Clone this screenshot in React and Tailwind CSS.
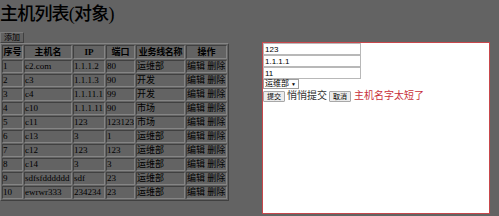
import React from "react";

const rows = [
  ["1", "c2.com", "1.1.1.2", "80", "运维部"],
  ["2", "c3", "1.1.1.3", "90", "开发"],
  ["3", "c4", "1.1.11.1", "99", "开发"],
  ["4", "c10", "1.1.1.11", "90", "市场"],
  ["5", "c11", "123", "123123", "市场"],
  ["6", "c13", "3", "1", "运维部"],
  ["7", "c12", "123", "123", "运维部"],
  ["8", "c14", "3", "3", "运维部"],
  ["9", "sdfsfdddddd", "sdf", "23", "运维部"],
  ["10", "ewrwr333", "234234", "23", "运维部"],
];

const serif = "font-['Liberation_Serif','Noto_Sans_CJK_SC',serif]";
const sans = "font-['Liberation_Sans','Noto_Sans_CJK_SC',sans-serif]";

const cell =
  "border border-t-[#404040] border-l-[#404040] border-b-[#858585] border-r-[#858585] p-0 h-[13px] leading-[11px] text-left align-middle whitespace-nowrap overflow-hidden";
const head =
  "border border-t-[#404040] border-l-[#404040] border-b-[#858585] border-r-[#858585] p-0 h-[14px] leading-[12px] font-bold text-center whitespace-nowrap";

export default function App() {
  return (
    <div className={`relative w-[499px] h-[216px] bg-[#636363] overflow-hidden text-black ${serif}`}>
      <h1 className="text-[18px] leading-[26px] font-medium pt-[1px] tracking-[-0.8px]">主机列表(对象)</h1>
      <div className="pt-[5px]">
        <button className={`block h-[11px] px-[3px] text-[8px] leading-[9px] bg-[#626262] border border-t-[#7a7a7a] border-l-[#7a7a7a] border-b-[#404040] border-r-[#404040] ${sans}`}>
          添加
        </button>
      </div>
      <table className="border-separate border-spacing-px border border-t-[#858585] border-l-[#858585] border-b-[#404040] border-r-[#404040] text-[9px] table-fixed w-[226px]">
        <colgroup>
          <col className="w-[21px]" />
          <col className="w-[48px]" />
          <col className="w-[32px]" />
          <col className="w-[29px]" />
          <col className="w-[49px]" />
          <col className="w-[41px]" />
        </colgroup>
        <thead>
          <tr>
            <th className={head}>序号</th>
            <th className={head}>主机名</th>
            <th className={head}>IP</th>
            <th className={head}>端口</th>
            <th className={`${head} tracking-[-0.3px]`}>业务线名称</th>
            <th className={head}>操作</th>
          </tr>
        </thead>
        <tbody>
          {rows.map((r) => (
            <tr key={r[0]}>
              {r.map((c, i) => (
                <td key={i} className={cell}>
                  {c}
                </td>
              ))}
              <td className={cell}>编辑 删除</td>
            </tr>
          ))}
        </tbody>
      </table>

      <div className={`absolute left-[262px] top-[42px] w-[228px] h-[172px] bg-white border border-[#c8474c] ${sans}`}>
        <div className="flex flex-col items-start">
          <input readOnly value="123" className="w-[98px] h-[12px] border border-[#b8b8b8] text-[8px] leading-[10px] px-[1px] outline-none" />
          <input readOnly value="1.1.1.1" className="w-[98px] h-[12px] border border-[#b8b8b8] text-[8px] leading-[10px] px-[1px] outline-none" />
          <input readOnly value="11" className="w-[98px] h-[12px] border border-[#b8b8b8] text-[8px] leading-[10px] px-[1px] outline-none" />
          <div className="flex items-center h-[10px] w-[36px] border border-[#a0a0a0] bg-white text-[8px] leading-[8px] pl-[1px] gap-[2px]">
            <span>运维部</span>
            <span className="text-[5px]">▼</span>
          </div>
          <div className="flex items-center h-[12px] mt-[1px] text-[10px] leading-[12px]">
            <button className="h-[11px] px-[3px] text-[7px] leading-[9px] bg-[#ececec] border border-[#a8a8a8] rounded-[1px]">提交</button>
            <span className="ml-[2px] text-[#333]">悄悄提交</span>
            <button className="ml-[2px] h-[11px] px-[3px] text-[7px] leading-[9px] bg-[#ececec] border border-[#a8a8a8] rounded-[1px]">取消</button>
            <span className="ml-[3px] text-[#c8303a]">主机名字太短了</span>
          </div>
        </div>
      </div>
    </div>
  );
}
